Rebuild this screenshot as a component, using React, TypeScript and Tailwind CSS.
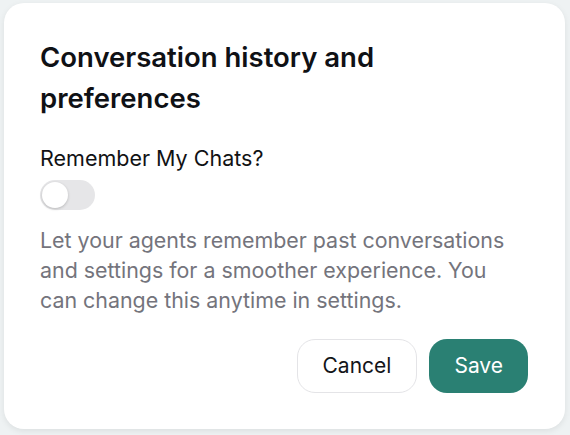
import React, { useState } from 'react';

const App: React.FC = () => {
  const [remember, setRemember] = useState(false);

  return (
    <div className="w-[570px] h-[435px] bg-[#eef2f3] pt-[3px] pl-[4px] font-['Inter',sans-serif]">
      <div className="w-[561px] h-[426px] bg-white rounded-[20px] shadow-[0_2px_6px_rgba(0,0,0,0.08)] px-[36px] pt-[34px] pb-[36px] flex flex-col">
        <h2 className="text-[27.5px] leading-[41px] font-semibold text-[#0f1115] w-[460px] mb-[25px]">
          Conversation history and preferences
        </h2>

        <p className="text-[21.5px] leading-[28px] font-normal text-[#111214]">Remember My Chats?</p>

        <button
          onClick={() => setRemember(!remember)}
          className={`mt-[8px] w-[55px] h-[30px] rounded-full p-[2px] flex items-center transition-colors ${remember ? 'bg-[#2a8073]' : 'bg-[#e6e6e8]'}`}
        >
          <span
            className={`block w-[26px] h-[26px] rounded-full bg-white shadow-[0_1px_3px_rgba(0,0,0,0.2)] transition-transform ${remember ? 'translate-x-[25px]' : 'translate-x-0'}`}
          ></span>
        </button>

        <p className="mt-[15px] text-[21.4px] leading-[30px] text-[#74747c] w-[480px]">
          Let your agents remember past conversations and settings for a smoother experience. You can change this anytime in settings.
        </p>

        <div className="mt-auto flex justify-end gap-[12px] pr-px">
          <button className="h-[54px] px-[25px] rounded-[18px] border border-[#e4e4e7] bg-white text-[21px] font-normal text-[#141519]">
            Cancel
          </button>
          <button className="h-[54px] px-[25px] rounded-[18px] bg-[#2a8073] text-[21px] text-white">
            Save
          </button>
        </div>
      </div>
    </div>
  );
};

export default App;
